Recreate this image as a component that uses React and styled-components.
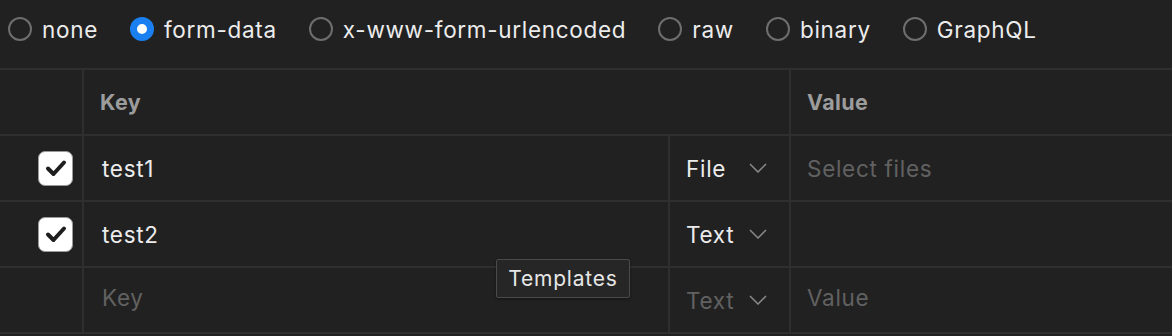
import styled, { createGlobalStyle } from "styled-components"

const Global = createGlobalStyle`
  html, body {
    margin: 0;
    padding: 0;
    background: #212121;
  }
  body {
    font-family: Inter, "Noto Sans", sans-serif;
    color: #ececec;
    letter-spacing: 0.7px;
  }
`

const Wrap = styled.div`
  width: 1172px;
  height: 336px;
  background: #212121;
  position: relative;
  overflow: hidden;
`

const RadioBar = styled.div`
  height: 68px;
  display: flex;
  align-items: center;
  padding-left: 8px;
  padding-bottom: 12px;
  box-sizing: border-box;
  gap: 32px;
  padding-top: 2px;
`

const RadioItem = styled.label`
  display: flex;
  align-items: center;
  gap: 10px;
  font-size: 22.5px;
  color: #ececec;
`

const RadioDot = styled.span`
  width: 24px;
  height: 24px;
  border-radius: 50%;
  box-sizing: border-box;
  border: ${({ $on }) => ($on ? "7px solid #1a80f2" : "2px solid #6e6e6e")};
  background: ${({ $on }) => ($on ? "#ffffff" : "transparent")};
  flex: none;
`

const Table = styled.div`
  border-top: 2px solid #2f2f2f;
  border-bottom: 2px solid #2f2f2f;
`

const Row = styled.div`
  display: grid;
  grid-template-columns: 82px 586px 121px 1fr;
  height: 64px;
  & + & {
    border-top: 2px solid #2f2f2f;
  }
`

const Cell = styled.div`
  display: flex;
  align-items: center;
  padding-left: ${({ $pad }) => $pad ?? 16}px;
  padding-bottom: ${({ $lift }) => ($lift ? 5 : 0)}px;
  font-size: 22.5px;
  color: ${({ $muted }) => ($muted ? "#616161" : "#ececec")};
  border-left: ${({ $first }) => ($first ? "none" : "2px solid #2f2f2f")};
  grid-column: ${({ $span }) => $span || "auto"};
  box-sizing: border-box;
  white-space: nowrap;
`

const HeadCell = styled(Cell)`
  font-weight: 700;
  font-size: 21.5px;
  letter-spacing: 0.4px;
  color: #9c9c9c;
`

const CheckCell = styled(Cell)`
  justify-content: flex-end;
  padding-left: 0;
  padding-right: 9px;
`

const CheckBox = styled.span`
  width: 35px;
  height: 35px;
  border-radius: 7px;
  background: #ffffff;
  border: 1px solid #9a9a9a;
  box-sizing: border-box;
  display: flex;
  align-items: center;
  justify-content: center;
`

const TypeCell = styled(Cell)`
  justify-content: space-between;
  padding-right: 22px;
`

const Chevron = styled.svg.attrs({ viewBox: "0 0 18 10", width: 18, height: 10 })`
  fill: none;
  stroke: #8a8a8a;
  stroke-width: 1.5;
`

const Tooltip = styled.div`
  position: absolute;
  left: 496px;
  top: 259px;
  width: 134px;
  height: 39px;
  box-sizing: border-box;
  border: 1px solid #4a4a4a;
  background: #262626;
  border-radius: 2px;
  font-size: 21px;
  letter-spacing: 0.8px;
  color: #e6e6e6;
  display: flex;
  align-items: center;
  justify-content: center;
  box-shadow: 0 1px 3px rgba(0, 0, 0, 0.4);
`

const Check = () => (
  <CheckBox>
    <svg width="22" height="18" viewBox="0 0 22 18">
      <path d="M3 9.5 L8.5 15 L19 3.5" fill="none" stroke="#1e1e1e" strokeWidth="4" strokeLinecap="round" strokeLinejoin="round" />
    </svg>
  </CheckBox>
)

const Down = () => (
  <Chevron>
    <path d="M1 1 L9 9 L17 1" />
  </Chevron>
)

const modes = [
  { label: "none" },
  { label: "form-data", on: true },
  { label: "x-www-form-urlencoded" },
  { label: "raw" },
  { label: "binary" },
  { label: "GraphQL" },
]

const rows = [
  { key: "test1", type: "File", value: "Select files", valueMuted: true, checked: true },
  { key: "test2", type: "Text", value: "", checked: true },
]

export default function App() {
  return (
    <Wrap>
      <Global />
      <RadioBar>
        {modes.map((m) => (
          <RadioItem key={m.label}>
            <RadioDot $on={m.on} />
            {m.label}
          </RadioItem>
        ))}
      </RadioBar>
      <Table>
        <Row>
          <Cell $first />
          <HeadCell $span="2 / 4">Key</HeadCell>
          <HeadCell>Value</HeadCell>
        </Row>
        {rows.map((r) => (
          <Row key={r.key}>
            <CheckCell $first>{r.checked && <Check />}</CheckCell>
            <Cell $pad={18}>{r.key}</Cell>
            <TypeCell>
              {r.type}
              <Down />
            </TypeCell>
            <Cell $muted={r.valueMuted}>{r.value}</Cell>
          </Row>
        ))}
        <Row>
          <Cell $first />
          <Cell $pad={18} $muted $lift>Key</Cell>
          <TypeCell $muted>
            Text
            <Down />
          </TypeCell>
          <Cell $muted $lift>Value</Cell>
        </Row>
      </Table>
      <Tooltip>Templates</Tooltip>
    </Wrap>
  )
}
